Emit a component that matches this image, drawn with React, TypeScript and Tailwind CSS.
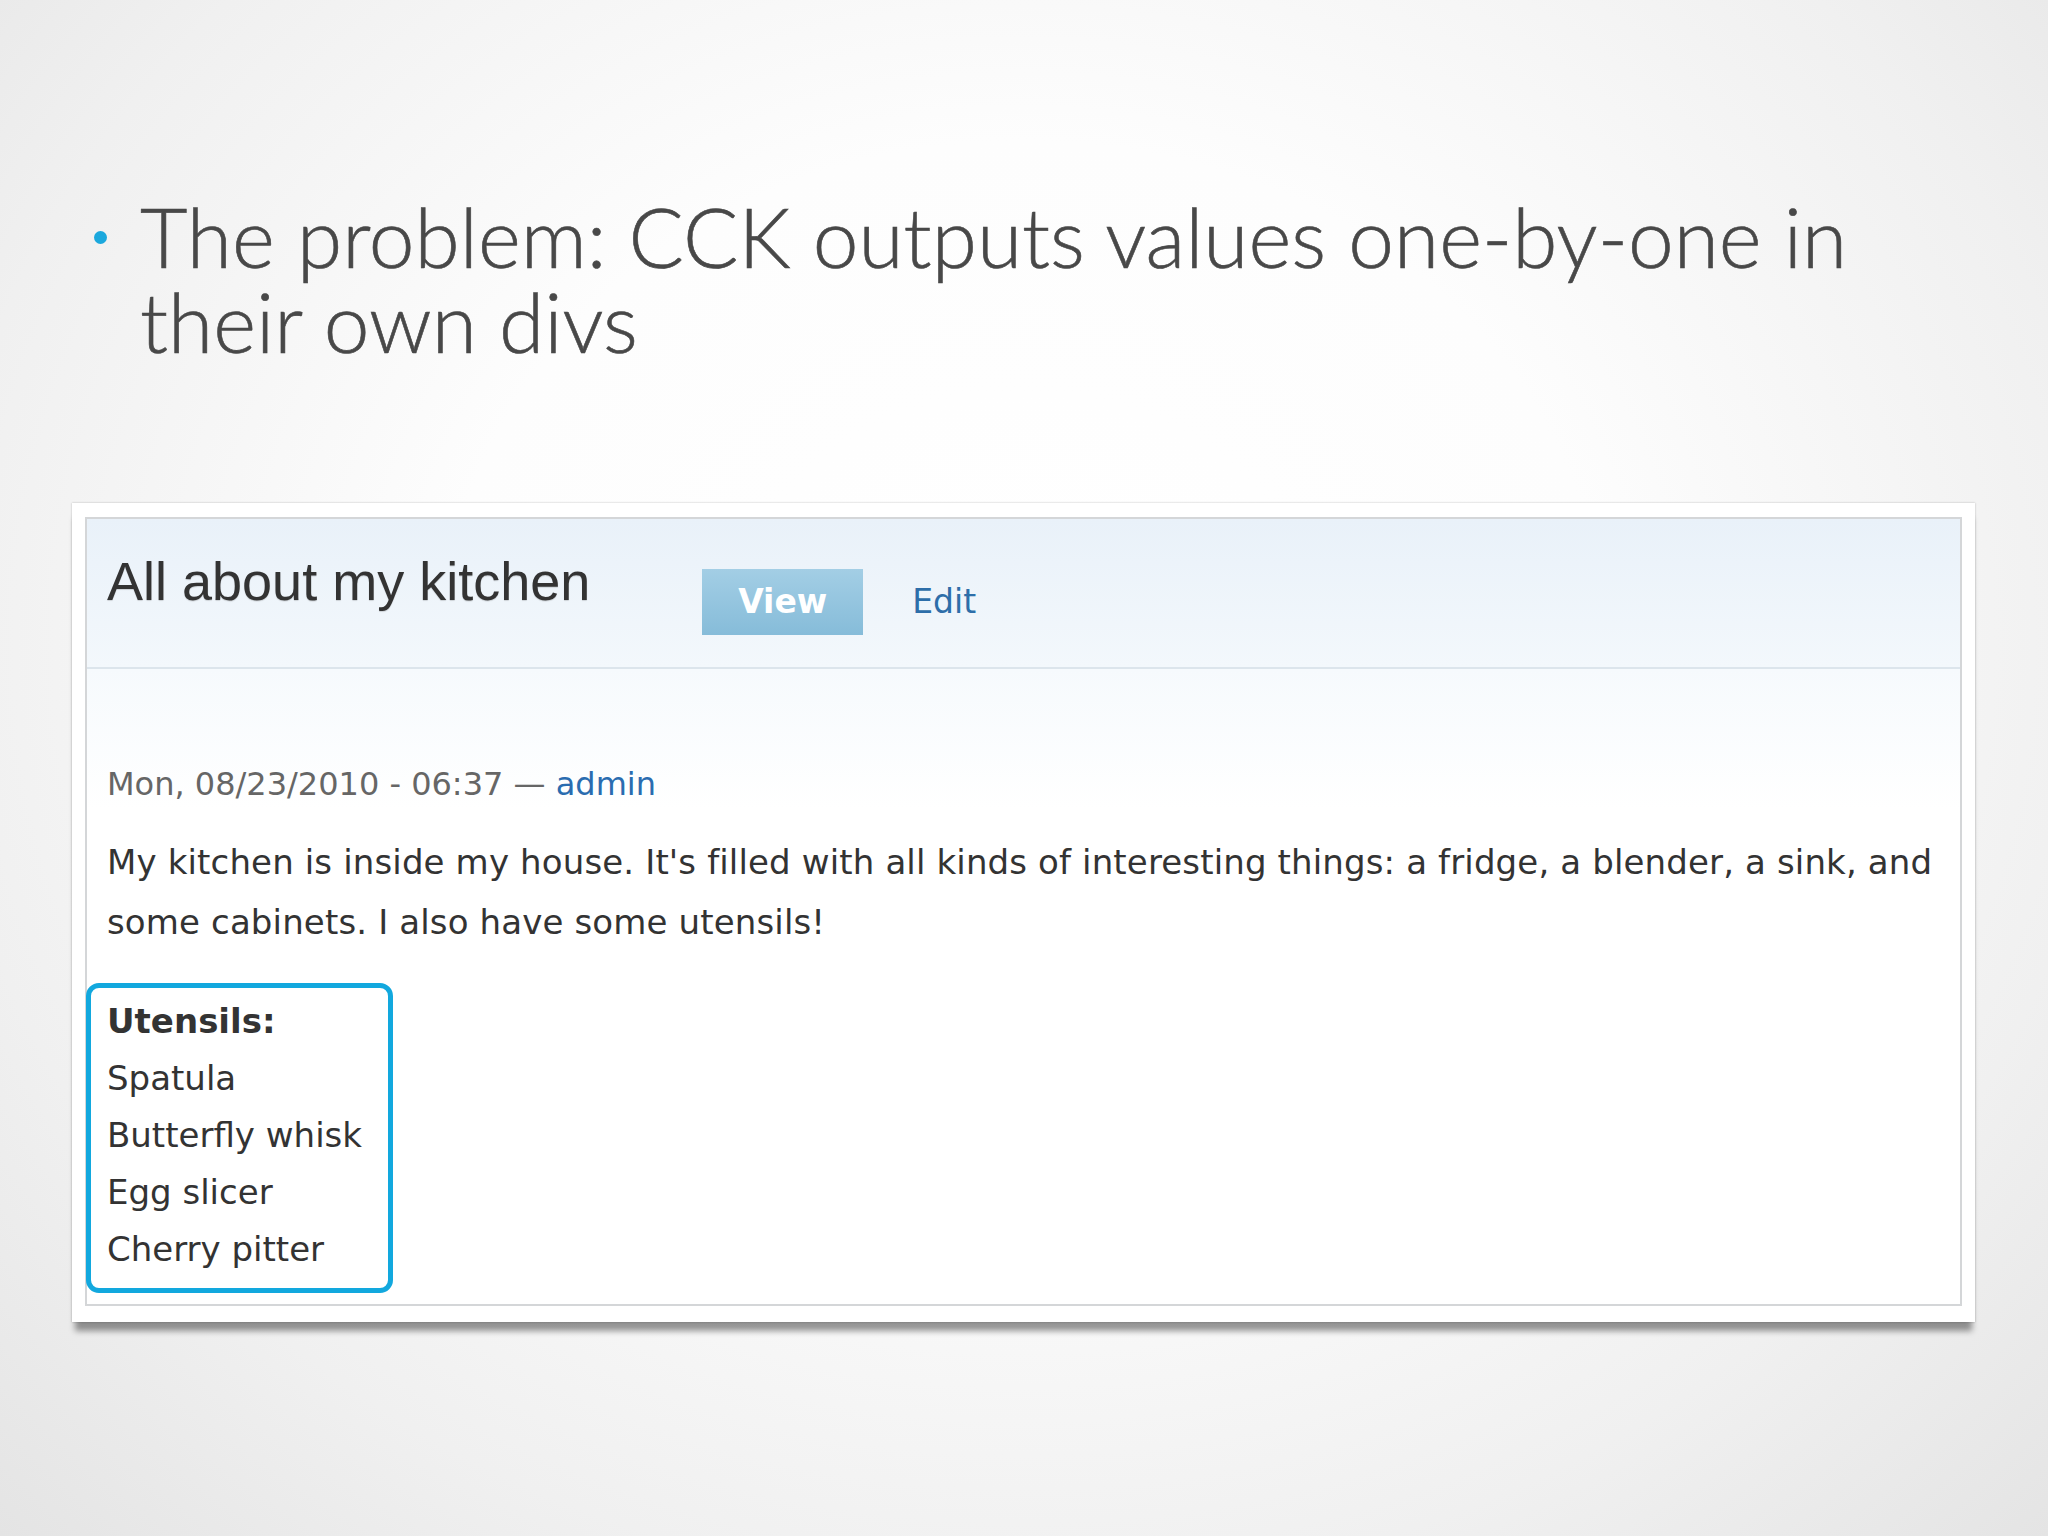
const utensils = ["Spatula", "Butterfly whisk", "Egg slicer", "Cherry pitter"];

export default function App() {
  return (
    <div className="w-full h-[1536px] overflow-hidden bg-[radial-gradient(ellipse_at_50%_42%,#ffffff_0%,#fdfdfd_40%,#f0f0f0_75%,#e4e4e4_100%)]">
      {/* slide bullet */}
      <div className="pt-[194px] pl-[94px] pr-[80px] flex items-start">
        <span className="mt-[37px] w-[13px] h-[13px] rounded-full bg-[#1ba8dd] shrink-0" />
        <p className="ml-[33px] text-[82px] leading-[85px] font-light text-[#484848] font-['Lato','Open_Sans',sans-serif] [-webkit-text-stroke:0.6px_#484848]">
          The problem: CCK outputs values one-by-one in their own divs
        </p>
      </div>

      {/* screenshot */}
      <div className="mt-[139px] ml-[72px] w-[1903px] bg-white px-[13px] pt-[14px] pb-[16px] shadow-[0_0_2px_rgba(0,0,0,0.25),0_12px_6px_-3px_rgba(0,0,0,0.4)]">
        <div className="border-2 border-[#d4d6d8] font-['DejaVu_Sans','Verdana',sans-serif]">
          <div className="h-[150px] bg-[linear-gradient(#e9f1f9,#f3f8fc)] border-b-2 border-[#dce5ec] pl-[20px] flex items-start">
            <h1 className="mt-[32px] text-[54px] leading-[60px] text-[#333333] font-['Liberation_Sans','Arial',sans-serif] [text-shadow:0_1px_1px_rgba(0,0,0,0.15)]">
              All about my kitchen
            </h1>
            <div className="ml-[112px] mt-[50px] flex items-center">
              <span className="w-[161px] h-[66px] flex items-center justify-center bg-[linear-gradient(#a3cee5,#86bcd9)] text-white font-bold text-[33px]">
                View
              </span>
              <span className="ml-[49px] text-[33px] text-[#2d6ea9]">Edit</span>
            </div>
          </div>

          <div className="bg-[linear-gradient(#f6fafd,#ffffff_140px)] pt-[85px] pl-[20px] pr-[24px] pb-[11px]">
            <div className="text-[32px] leading-[60px] text-[#666666]">
              Mon, 08/23/2010 - 06:37 — <span className="text-[#2a6cb0]">admin</span>
            </div>
            <p className="mt-[18px] text-[34px] leading-[60px] text-[#333333] tracking-[0.14px]">
              My kitchen is inside my house. It's filled with all kinds of interesting things: a fridge, a blender, a sink, and some cabinets. I also have some utensils!
            </p>
            <div className="mt-[31px] -ml-[21px] w-[307px] border-[5px] border-[#12a8de] rounded-[13px] pl-[16px] pt-[5px] pb-[10px] text-[34px] leading-[57px] text-[#333333]">
              <div className="font-bold">Utensils:</div>
              {utensils.map((u) => (
                <div key={u}>{u}</div>
              ))}
            </div>
          </div>
        </div>
      </div>
    </div>
  );
}
